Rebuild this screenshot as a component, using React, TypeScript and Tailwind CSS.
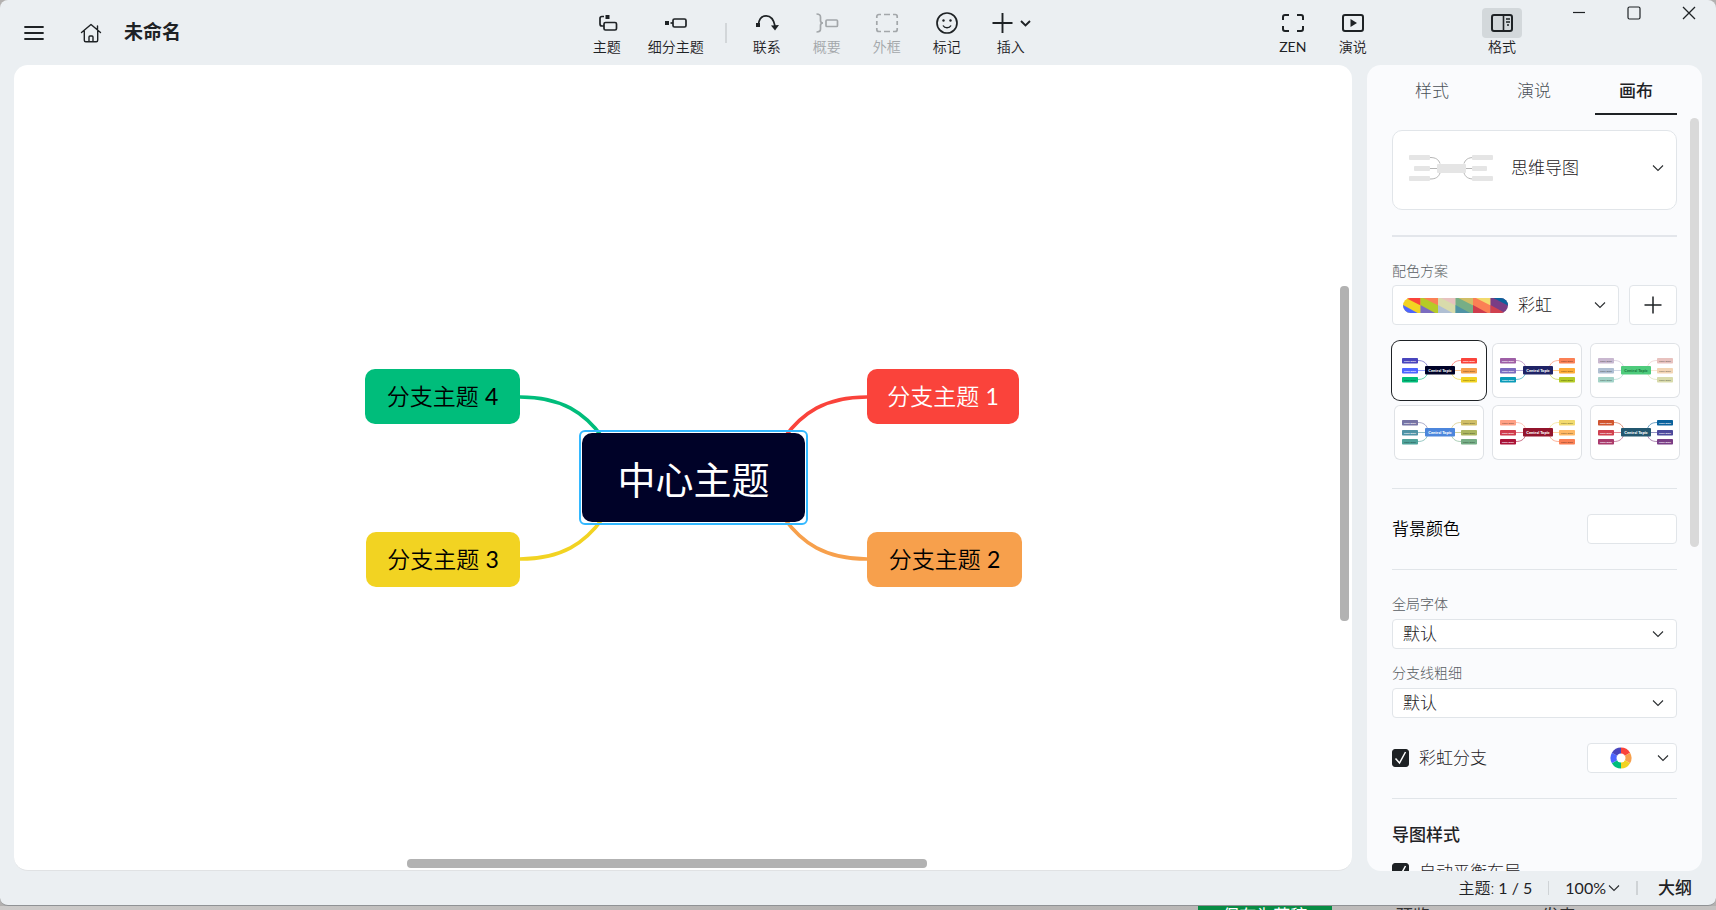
import { useState, type ReactNode } from 'react';
import { clsx } from 'clsx';

type Palette = { center: string; text: string; left: string[]; right: string[] };

const PALETTES: Palette[] = [
  { center: '#000228', text: '#fff', left: ['#4945bd', '#4d65ff', '#00bd7b'], right: ['#fa433b', '#f7a04c', '#f2d322'] },
  { center: '#1f2366', text: '#fff', left: ['#9e5fa6', '#7b6cc0', '#0a9bb8'], right: ['#fb8055', '#ffac37', '#b5cb26'] },
  { center: '#4ecb7c', text: '#1d7a41', left: ['#c9b8d0', '#b0bfd3', '#a3d3c8'], right: ['#e8c2bf', '#f3d5b5', '#d9dbab'] },
  { center: '#4c86dc', text: '#fff', left: ['#7673a4', '#4f93a5', '#4fa29a'], right: ['#d0be67', '#abb660', '#76ae86'] },
  { center: '#93142c', text: '#fff', left: ['#ffa084', '#cf3c4d', '#a91338'], right: ['#f2da6e', '#ffb865', '#fb8055'] },
  { center: '#23576f', text: '#fff', left: ['#d0552f', '#d0414f', '#a93a6b'], right: ['#0a629c', '#4d499c', '#793d85'] },
];

// node fills that take dark text
const LIGHT_NODES = ['#00bd7b', '#f7a04c', '#f2d322', '#fb8055', '#ffac37', '#b5cb26', '#c9b8d0', '#b0bfd3', '#a3d3c8', '#e8c2bf', '#f3d5b5', '#d9dbab', '#4fa29a', '#d0be67', '#abb660', '#76ae86', '#ffa084', '#f2da6e', '#ffb865'];

const STRIP = [
  ['#fa433b', '#f2d322', '#4d65ff'],
  ['#fb8055', '#b5cb26', '#7b6cc0'],
  ['#e8c2bf', '#d9dbab', '#b0bfd3'],
  ['#d0be67', '#76ae86', '#4f93a5'],
  ['#f2da6e', '#fb8055', '#cf3c4d'],
  ['#0a629c', '#793d85', '#d0414f'],
];

const WHEEL = ['#fa433b', '#f7a04c', '#f2d322', '#00bd7b', '#4d65ff', '#4945bd'];

function Chevron({ className }: { className?: string }) {
  return (
    <svg viewBox="0 0 12 8" aria-hidden className={clsx('pointer-events-none h-2 w-3 shrink-0', className)} fill="none" stroke="#2b2e31" strokeWidth="1.1">
      <path d="M1 1.500 6 6.500 11 1.500" />
    </svg>
  );
}

function ToolButton({ label, icon, disabled, active, className = 'w-15' }: { label: ReactNode; icon: ReactNode; disabled?: boolean; active?: boolean; className?: string }) {
  return (
    <button
      type="button"
      disabled={disabled}
      className={clsx('flex flex-col items-center text-sm font-[350] whitespace-nowrap text-[#1e2225] disabled:text-[#a3a7aa]', className)}
    >
      <span className={clsx('flex h-[30px] min-w-10 items-center justify-center rounded', active && 'bg-[#d3d8db]')}>{icon}</span>
      <span className="leading-[18px]">{label}</span>
    </button>
  );
}

function Icon({ children, w = 24 }: { children: ReactNode; w?: number }) {
  return (
    <svg width={w} height="24" viewBox={`0 0 ${w} 24`} fill="none" stroke="currentColor" strokeWidth="1.7" aria-hidden>
      {children}
    </svg>
  );
}

function TopBar() {
  return (
    <header className="flex h-[65px] shrink-0 items-start">
      <div className="flex h-full items-center pl-6">
        <button type="button" aria-label="菜单" className="text-[#1e2225]">
          <svg width="20" height="18" viewBox="0 0 20 18" stroke="currentColor" strokeWidth="1.8" strokeLinecap="round">
            <path d="M1 3h18M1 9h18M1 15h18" />
          </svg>
        </button>
        <button type="button" aria-label="主页" className="ml-9 text-[#1e2225]">
          <svg width="22" height="20" viewBox="0 0 22 20" fill="none" stroke="currentColor" strokeWidth="1.4" strokeLinecap="round" strokeLinejoin="round">
            <path d="M1.500 9.500 11 1.500 20.500 9.500M17.500 7V3M4.300 8v9.200a1.500 1.500 0 0 0 1.500 1.500h10.400a1.500 1.500 0 0 0 1.500-1.500V8M9 18.500V14a1 1 0 0 1 1-1h2a1 1 0 0 1 1 1v4.500" />
          </svg>
        </button>
        <h1 className="ml-[22px] text-[19px] font-bold text-[#1e2225]">未命名</h1>
      </div>
      <div className="flex-[408]" />

      <nav aria-label="工具栏" className="flex pt-2">
        <ToolButton
          label="主题"
          icon={
            <Icon>
              <path d="M9 5.500H7A2 2 0 0 0 5 7.500V13a2 2 0 0 0 2 2H9" />
              <rect x="9" y="11.500" width="12.500" height="7.500" rx="1.500" />
              <rect x="10.500" y="4" width="4" height="4" fill="currentColor" stroke="none" />
            </Icon>
          }
        />
        <ToolButton
          label="细分主题"
          className="w-[78px]"
          icon={
            <Icon>
              <rect x="1" y="10" width="4" height="4" fill="currentColor" stroke="none" />
              <path d="M6.500 12H9" />
              <rect x="9" y="8" width="13" height="8" rx="1.500" />
            </Icon>
          }
        />
        <span className="mx-[10px] mt-[15px] h-5 w-0.5 bg-[#d2d6d9]" />
        <ToolButton
          label="联系"
          icon={
            <Icon>
              <path d="M3.500 13.500C4 8 7 4.800 11.200 4.800c4.500 0 7.500 3.400 8.800 10.200" />
              <rect x="1" y="12" width="4" height="4" fill="currentColor" stroke="none" />
              <path d="M16 14.500 24 14l-4 5.500z" fill="currentColor" stroke="none" />
            </Icon>
          }
        />
        <ToolButton
          label="概要"
          disabled
          icon={
            <Icon>
              <path d="M1.500 3c3 0 4 1 4 3v3.500c0 1.500.8 2.500 2.500 2.500-1.700 0-2.500 1-2.500 2.500V18c0 2-1 3-4 3" />
              <rect x="11" y="9" width="11.500" height="6.500" rx="1" />
            </Icon>
          }
        />
        <ToolButton
          label="外框"
          disabled
          icon={
            <Icon>
              <path d="M1.800 7V5.500a2 2 0 0 1 2-2H6M9 3.500h6M18 3.500h2.200a2 2 0 0 1 2 2V7M22.200 10v4M22.200 17v1.500a2 2 0 0 1-2 2H18M15 20.500H9M6 20.500H3.800a2 2 0 0 1-2-2V17M1.800 14v-4" />
            </Icon>
          }
        />
        <ToolButton
          label="标记"
          icon={
            <Icon>
              <circle cx="12" cy="12" r="10" />
              <circle cx="8.500" cy="9.500" r="1.200" fill="currentColor" stroke="none" />
              <circle cx="15.500" cy="9.500" r="1.200" fill="currentColor" stroke="none" />
              <path d="M8 14.500c1 1.800 2.500 2.300 4 2.300s3-.5 4-2.300" strokeWidth="1.400" />
            </Icon>
          }
        />
        <ToolButton
          label="插入"
          className="ml-1 w-15"
          icon={
            <Icon w={40}>
              <path d="M1.500 12h20M11.500 2v20M30 10l4.500 4.500L39 10" strokeWidth="1.900" />
            </Icon>
          }
        />
      </nav>
      <div className="flex-[229]" />

      <div className="flex pt-2">
        <ToolButton
          label={<span className="font-normal">ZEN</span>}
          icon={
            <Icon>
              <path d="M2 9V6a2 2 0 0 1 2-2h4M16 4h4a2 2 0 0 1 2 2v3M22 15v3a2 2 0 0 1-2 2h-4M8 20H4a2 2 0 0 1-2-2v-3" strokeWidth="2" />
            </Icon>
          }
        />
        <ToolButton
          label="演说"
          icon={
            <Icon>
              <rect x="2" y="4" width="20" height="16" rx="2" strokeWidth="2" />
              <path d="M9.500 8v8l6.500-4z" fill="currentColor" stroke="none" />
            </Icon>
          }
        />
      </div>
      <div className="flex-[92]" />
      <div className="flex pt-2">
        <ToolButton
          label="格式"
          active
          icon={
            <Icon>
              <rect x="2" y="4" width="20" height="16" rx="2" strokeWidth="2" />
              <path d="M13.500 4v16" strokeWidth="1.600" />
              <path d="M16 8h4M16 11h4M17 14h2" strokeWidth="1.300" />
            </Icon>
          }
        />
      </div>

      <div className="flex pt-1.5 pr-5 pl-10 text-[#1e2225]">
        <button type="button" aria-label="最小化">
          <svg width="14" height="14" viewBox="0 0 14 14" stroke="currentColor" strokeWidth="1.200"><path d="M1 6.500h12" /></svg>
        </button>
        <button type="button" aria-label="最大化" className="ml-[41px]">
          <svg width="14" height="14" viewBox="0 0 14 14" fill="none" stroke="currentColor" strokeWidth="1.200"><rect x="1" y="1" width="12" height="12" rx="1.500" /></svg>
        </button>
        <button type="button" aria-label="关闭" className="ml-[41px]">
          <svg width="14" height="14" viewBox="0 0 14 14" stroke="currentColor" strokeWidth="1.300"><path d="m1 1 12 12M13 1 1 13" /></svg>
        </button>
      </div>
    </header>
  );
}

function BranchNode({ n, className }: { n: number; className: string }) {
  return (
    <div className={clsx('absolute flex h-[55px] items-center justify-center rounded-[10px] text-[23px] font-[350] whitespace-pre', className)}>
      分支主题 <span className="font-normal">{n}</span>
    </div>
  );
}

function MindMap() {
  return (
    <div className="absolute top-[304px] left-[351px] h-[219px] w-[658px]">
      <svg viewBox="0 0 658 219" className="absolute inset-0 h-full w-full" fill="none" strokeWidth="3.700" aria-hidden>
        <path d="M155 28c42 0 65 16 83 41" stroke="#00bd7b" />
        <path d="M155 190c42 0 65-16 83-41" stroke="#f2d322" />
        <path d="M502 28c-42 0-65 16-83 41" stroke="#fa433b" />
        <path d="M502 190c-42 0-65-16-83-41" stroke="#f7a04c" />
      </svg>
      <BranchNode n={4} className="top-0 left-0 w-[155px] bg-[#00bd7b] text-black" />
      <BranchNode n={3} className="top-[163px] left-px w-[154px] bg-[#f2d322] text-black" />
      <BranchNode n={1} className="top-0 left-[502px] w-[152px] bg-[#fa433b] text-white" />
      <BranchNode n={2} className="top-[163px] left-[502px] w-[155px] bg-[#f7a04c] text-black" />
      <div className="absolute top-[61px] left-[214px] h-[95px] w-[229px] rounded-md border-2 border-[#33b8ff] p-px">
        <div className="flex h-full items-center justify-center rounded-[10px] bg-[#000228] pt-1 text-[38px] text-white">中心主题</div>
      </div>
    </div>
  );
}

function Thumb({ palette }: { palette: Palette }) {
  const rows = [15, 25, 34];
  const bend = ['M24 17.500c5 0 8 2 9.500 6', 'M24 27.500h8', 'M24 36.500c5 0 8-2 9.500-6'];
  const bendRight = ['M67 17.500c-5 0-8 2-9.500 6', 'M67 27.500h-8', 'M67 36.500c-5 0-8-2-9.500-6'];
  const branch = (color: string, x: number, y: number) => {
    const light = LIGHT_NODES.includes(color);
    return (
      <g key={`${x}-${y}`}>
        <rect x={x} y={y} width="16" height="5.500" rx="0.800" fill={color} />
        <text x={x + 8} y={y + 3.7} fontSize="2.500" fontWeight="700" textAnchor="middle" fill={light ? '#000' : '#fff'} fillOpacity={light ? 0.5 : 1}>
          Main Topic
        </text>
      </g>
    );
  };
  return (
    <svg viewBox="0 0 90 55" className="h-full w-full" aria-hidden>
      {palette.left.map((color, i) => <path key={i} d={bend[i]} stroke={color} strokeWidth="0.600" fill="none" />)}
      {palette.right.map((color, i) => <path key={i} d={bendRight[i]} stroke={color} strokeWidth="0.600" fill="none" />)}
      {palette.left.map((color, i) => branch(color, 8, rows[i]))}
      {palette.right.map((color, i) => branch(color, 67, rows[i]))}
      <rect x="31" y="23" width="30" height="8.500" rx="1" fill={palette.center} />
      <text x="46" y="28.700" fontSize="4" fontWeight="900" textAnchor="middle" fill={palette.text}>Central Topic</text>
    </svg>
  );
}

function SelectRow({ id, label }: { id: string; label: string }) {
  return (
    <div>
      <label htmlFor={id} className="block text-sm leading-5 font-light text-[#585d62]">{label}</label>
      <div className="mt-[5px] flex h-[30px] items-center rounded border border-[#e1e5e9] bg-white pr-3">
        <select id={id} className="h-full min-w-0 flex-1 appearance-none pl-2.5 text-[17px] leading-7 font-light text-[#1e2225]">
          <option>默认</option>
        </select>
        <Chevron />
      </div>
    </div>
  );
}

function CheckRow({ id, label, children }: { id: string; label: string; children?: ReactNode }) {
  return (
    <div className="flex h-[30px] items-center">
      <span className="grid shrink-0">
        <input id={id} type="checkbox" defaultChecked className="peer col-start-1 row-start-1 h-[18px] w-[17px] appearance-none rounded-[3px] border border-[#1e2225] checked:bg-[#1e2225]" />
        <svg viewBox="0 0 17 18" className="pointer-events-none invisible col-start-1 row-start-1 h-[18px] w-[17px] peer-checked:visible" fill="none" stroke="#fff" strokeWidth="1.500" aria-hidden>
          <path d="m3.500 9.500 4 4.500 6-11" />
        </svg>
      </span>
      <label htmlFor={id} className="ml-2.5 flex-1 text-[17px] font-light text-[#1e2225]">{label}</label>
      {children}
    </div>
  );
}

function ColorWheel() {
  return (
    <svg width="22" height="22" viewBox="-11 -11 22 22" aria-hidden>
      {WHEEL.map((color, i) => (
        <path key={color} d="M0 0V-10.500A10.500 10.500 0 0 1 9.093 -5.250Z" fill={color} transform={`rotate(${i * 60})`} />
      ))}
      <circle r="4.500" fill="#fff" />
    </svg>
  );
}

function FormatPanel() {
  const [tab, setTab] = useState('画布');
  const [palette, setPalette] = useState(0);
  return (
    <aside aria-label="格式" className="relative flex w-[335px] shrink-0 flex-col overflow-hidden rounded-[14px] bg-[#fafbfd] px-[25px]">
      <div role="tablist" className="-ml-px flex h-[50px] shrink-0 justify-between">
        {['样式', '演说', '画布'].map((name) => (
          <button
            key={name}
            type="button"
            role="tab"
            aria-selected={tab === name}
            onClick={() => setTab(name)}
            className={clsx('w-[82px] border-b-2 pt-1 text-[17px]', tab === name ? 'border-[#1e2225] font-medium text-[#1e2225]' : 'border-transparent font-light text-[#4b5157]')}
          >
            {name}
          </button>
        ))}
      </div>

      <div className="mt-[15px] flex h-20 shrink-0 items-center rounded-[10px] border border-[#e1e5e9] bg-white pr-3 pb-1 pl-4">
        <svg width="86" height="28" viewBox="0 0 86 28" aria-hidden>
          <g fill="none" stroke="#b5b5b5">
            <path d="M21 3.500c6 0 8.500 2 10 6M21 14.500h8M21 25c6 0 8.500-2 10-6M65 3.500c-6 0-8.500 2-10 6M65 14.500h-8M65 25c-6 0-8.500-2-10-6" />
          </g>
          <g fill="#e5e5e5">
            <rect x="0" y="1" width="21" height="5" rx="1" />
            <rect x="5" y="12" width="16" height="5" rx="1" />
            <rect x="0" y="22" width="21" height="5" rx="1" />
            <rect x="28" y="10" width="29" height="9" rx="1" />
            <rect x="63" y="1" width="21" height="5" rx="1" />
            <rect x="63" y="12" width="15" height="5" rx="1" />
            <rect x="63" y="22" width="21" height="5" rx="1" />
          </g>
        </svg>
        <select aria-label="结构" className="ml-4 h-full min-w-0 flex-1 appearance-none text-[17px] font-light text-[#1e2225]">
          <option>思维导图</option>
        </select>
        <Chevron />
      </div>

      <hr className="mt-[25px] shrink-0 border-t-2 border-[#e3e6eb]" />
      <label htmlFor="scheme" className="mt-6 block text-sm leading-5 font-light text-[#585d62]">配色方案</label>
      <div className="mt-1 flex h-10 shrink-0 gap-2.5">
        <div className="flex flex-1 items-center rounded border border-[#e1e5e9] bg-white pr-3 pl-2.5">
          <svg width="105" height="15" viewBox="0 0 108 15" preserveAspectRatio="none" className="rounded-full" aria-hidden>
            {STRIP.map(([top, middle, bottom], i) => (
              <g key={top} transform={`translate(${i * 18} 0)`}>
                <rect width="18.200" height="15" fill={middle} />
                <path d="M3 0h15.200v7.500z" fill={top} />
                <path d="M0 7v8h15z" fill={bottom} />
              </g>
            ))}
          </svg>
          <select id="scheme" className="h-full min-w-0 flex-1 appearance-none pl-2.5 text-[17px] font-light text-[#1e2225]">
            <option>彩虹</option>
          </select>
          <Chevron />
        </div>
        <button type="button" aria-label="添加配色" className="flex w-12 items-center justify-center rounded border border-[#e1e5e9] bg-white">
          <svg width="18" height="18" viewBox="0 0 18 18" stroke="#1e2225" strokeWidth="1.500"><path d="M.5 9h17M9 .5v17" /></svg>
        </button>
      </div>

      <div className="mt-[18px] ml-0.5 grid shrink-0 grid-cols-[repeat(3,90px)] gap-x-2 gap-y-[7px]">
        {PALETTES.map((item, i) => (
          <button
            key={item.center}
            type="button"
            aria-label={`配色 ${i + 1}`}
            aria-pressed={palette === i}
            onClick={() => setPalette(i)}
            className={clsx('h-[55px] rounded-md bg-white', palette === i ? 'shadow-[0_0_0_2px_#fff,0_0_0_3px_#1e2225]' : 'shadow-[inset_0_0_0_1px_#dfe2e6]')}
          >
            <Thumb palette={item} />
          </button>
        ))}
      </div>

      <hr className="mt-7 shrink-0 border-[#e1e5e9]" />
      <div className="mt-[25px] flex h-[30px] shrink-0 items-center justify-between">
        <span id="bg-label" className="text-[17px] font-[350] text-black">背景颜色</span>
        <button type="button" aria-labelledby="bg-label" className="h-full w-[90px] rounded border border-[#e1e5e9] bg-white" />
      </div>
      <hr className="mt-[25px] shrink-0 border-[#e1e5e9]" />

      <div className="mt-6 flex shrink-0 flex-col gap-[14px]">
        <SelectRow id="font" label="全局字体" />
        <SelectRow id="thickness" label="分支线粗细" />
      </div>

      <div className="mt-[25px] shrink-0">
        <CheckRow id="rainbow" label="彩虹分支">
          <button type="button" aria-label="彩虹分支颜色" className="flex h-full w-[90px] items-center justify-between rounded border border-[#e1e5e9] bg-white pr-[7px] pl-[22px]">
            <ColorWheel />
            <Chevron />
          </button>
        </CheckRow>
      </div>
      <hr className="mt-[25px] shrink-0 border-[#e1e5e9]" />
      <h2 className="mt-6 shrink-0 text-[17px] leading-6 font-medium text-[#1e2225]">导图样式</h2>
      <div className="mt-2.5 shrink-0">
        <CheckRow id="balance" label="自动平衡布局" />
      </div>

      <span className="absolute top-[53px] right-[3px] h-[429px] w-[9px] rounded-full bg-[#d9d9d9]" />
    </aside>
  );
}

function StatusBar() {
  return (
    <footer className="flex h-[34px] shrink-0 items-center justify-end pr-6 text-base text-[#1e2225]">
      <span><span className="font-[350]">主题:</span> 1 / 5</span>
      <span className="mx-4 h-3.5 w-px bg-[#cfd3d6]" />
      <button type="button" className="flex items-center gap-0.5">
        100%
        <Chevron className="w-2.5" />
      </button>
      <span className="mr-5 ml-4 h-3.5 w-0.5 bg-[#cfd3d6]" />
      <button type="button" className="text-[17px] font-medium">大纲</button>
    </footer>
  );
}

export default function App() {
  return (
    <div className="flex h-screen flex-col overflow-hidden bg-[#b3b1b0] font-['Lato','Noto_Sans_CJK_SC',sans-serif]">
      <div className="flex min-h-0 flex-1 flex-col rounded-lg border-b border-[#8f9295] bg-[#ebeff2]">
        <TopBar />
        <div className="flex min-h-0 flex-1 gap-[15px] px-[14px]">
          <main className="relative min-w-0 flex-1 overflow-hidden rounded-[14px] border-b border-[#e0e2e4] bg-white">
            <MindMap />
            <span className="absolute top-[27.4%] right-[3px] h-[41.7%] w-[9px] rounded bg-[#b2b2b2]" />
            <span className="absolute bottom-0.5 left-[29.4%] h-[9px] w-[38.8%] rounded bg-[#b2b2b2]" />
          </main>
          <FormatPanel />
        </div>
        <StatusBar />
      </div>
      <div className="flex h-1 shrink-0 overflow-hidden bg-linear-to-r from-[#cdcbca] via-[#b3b1b0] to-[#c4c2c1] text-[17px] leading-5">
        <span className="w-[69.8%]" />
        <span className="w-[134px] bg-[#078c44] text-center text-white">保存为草稿</span>
        <span className="ml-16 text-[#333]">预览</span>
        <span className="ml-28 text-[#333]">发表</span>
      </div>
    </div>
  );
}
